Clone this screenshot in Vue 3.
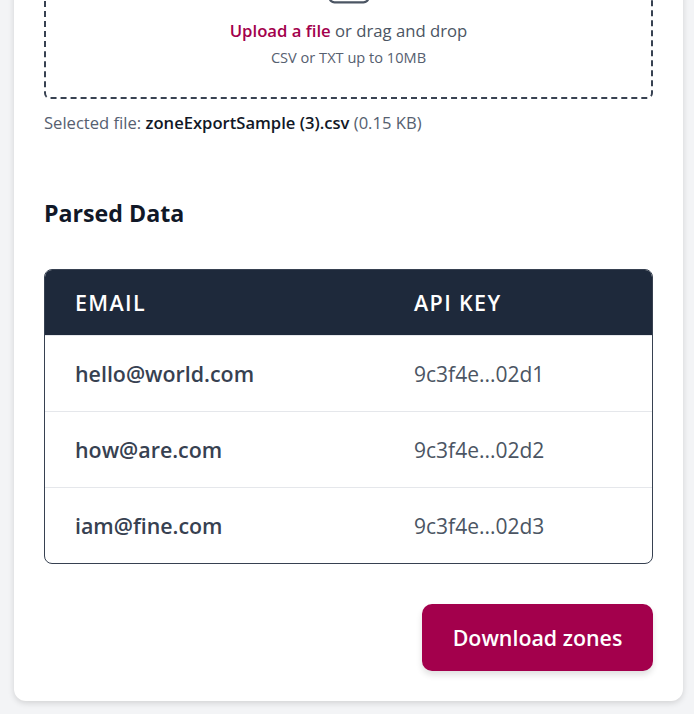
<script setup>
const rows = [
  { email: 'hello@world.com', key: '9c3f4e...02d1' },
  { email: 'how@are.com', key: '9c3f4e...02d2' },
  { email: 'iam@fine.com', key: '9c3f4e...02d3' }
]
</script>

<template>
  <div class="page">
    <main class="card">
      <div class="dropzone">
        <svg class="upload-icon" width="58" height="58" viewBox="0 0 48 48" fill="none" stroke="#4b5563" stroke-width="2" stroke-linecap="round" stroke-linejoin="round">
          <path d="M28 8H12a4 4 0 00-4 4v20m32-12v8m0 0v8a4 4 0 01-4 4H12a4 4 0 01-4-4v-4m32-4l-3.172-3.172a4 4 0 00-5.656 0L28 28M8 32l9.172-9.172a4 4 0 015.656 0L28 28m0 0l4 4m4-24h8m-4-4v8m-12 4h.02" />
        </svg>
        <p class="drop-text"><span class="upload-link">Upload a file</span> or drag and drop</p>
        <p class="drop-hint">CSV or TXT up to 10MB</p>
      </div>
      <p class="selected">Selected file: <strong>zoneExportSample (3).csv</strong> (0.15 KB)</p>

      <h2 class="title">Parsed Data</h2>

      <div class="table-wrap">
        <table>
          <thead>
            <tr>
              <th class="col-email">Email</th>
              <th>API Key</th>
            </tr>
          </thead>
          <tbody>
            <tr v-for="row in rows" :key="row.email">
              <td class="email">{{ row.email }}</td>
              <td class="key">{{ row.key }}</td>
            </tr>
          </tbody>
        </table>
      </div>

      <div class="actions">
        <button class="download">Download zones</button>
      </div>
    </main>
  </div>
</template>

<style>
html, body {
  margin: 0;
  background: #f3f4f6;
}
</style>

<style scoped>
/* page is scrolled to the bottom in the reference, so anchor the card there */
.page {
  height: 714px;
  overflow: hidden;
  display: flex;
  flex-direction: column;
  justify-content: flex-end;
  padding: 0 11px 13px 14px;
  box-sizing: border-box;
  font-family: "Open Sans", "Noto Sans", sans-serif;
}

.card {
  flex: none;
  background: #fff;
  border-radius: 12px;
  box-shadow: 0 2px 6px rgba(0, 0, 0, 0.14);
  padding: 30px;
}

.dropzone {
  border: 2px dashed #374151;
  border-radius: 6px;
  padding: 24px 0 30px;
  text-align: center;
}

.upload-icon {
  display: block;
  margin: 0 auto 7px;
}

.drop-text {
  margin: 0;
  font-size: 16.7px;
  line-height: 24px;
  color: #4b5563;
}

.upload-link {
  color: #a3004c;
  font-weight: 600;
}

.drop-hint {
  margin: 4px 0 0;
  font-size: 14.6px;
  line-height: 20px;
  color: #566070;
}

.selected {
  margin: 12px 0 0;
  font-size: 16.6px;
  line-height: 24px;
  color: #566070;
}

.selected strong {
  color: #111827;
  font-weight: 600;
}

.title {
  margin: 62px 0 0;
  font-size: 23.2px;
  line-height: 32px;
  font-weight: 700;
  color: #111827;
}

.table-wrap {
  margin-top: 40px;
  border: 1px solid #374151;
  border-radius: 8px;
  overflow: hidden;
}

table {
  width: 100%;
  border-collapse: collapse;
}

th {
  background: #1e293b;
  color: #fff;
  text-align: left;
  text-transform: uppercase;
  font-size: 21.5px;
  font-weight: 600;
  letter-spacing: 1.35px;
  line-height: 28px;
  padding: 19px 30px 18px;
}

.col-email {
  width: 279px;
}

td {
  padding: 22px 30px 21px;
  font-size: 21.4px;
  line-height: 32px;
  border-top: 1px solid #e5e7eb;
}

.email {
  color: #374151;
  font-weight: 600;
}

.key {
  color: #4b5563;
  font-size: 21px;
}

.actions {
  display: flex;
  justify-content: flex-end;
  margin-top: 40px;
}

.download {
  height: 67px;
  width: 231px;
  border: 0;
  border-radius: 10px;
  background: #a3004c;
  color: #fff;
  font-family: inherit;
  font-size: 21.4px;
  font-weight: 600;
  box-shadow: 0 4px 6px rgba(0, 0, 0, 0.12);
}
</style>
